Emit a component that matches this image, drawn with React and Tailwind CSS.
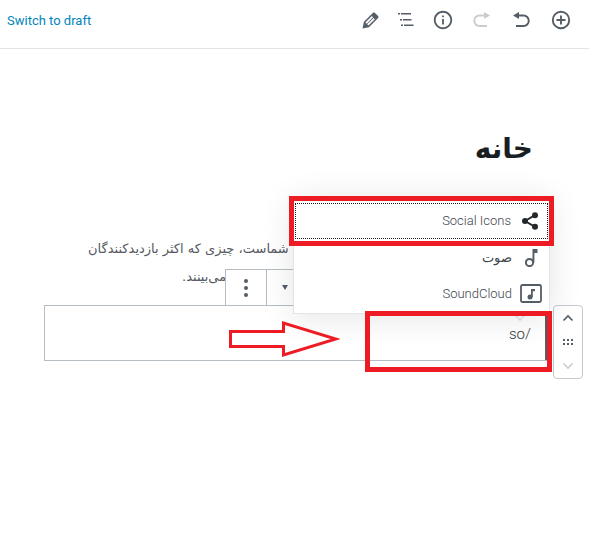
function Pencil() {
  return (
    <svg viewBox="0 0 20 20" className="w-[23px] h-[23px] fill-[#555d66]">
      <path d="M13.89 3.39l2.71 2.72c.46.46.42 1.24.03 1.64l-8.01 8.02-5.56 1.16 1.16-5.58s7.6-7.63 7.99-8.03c.39-.39 1.22-.39 1.68.07zm-2.73 2.79l-5.59 5.61 1.11 1.11 5.54-5.65zm-2.97 8.23l5.58-5.6-1.07-1.08-5.59 5.6z" />
    </svg>
  );
}
function Outline() {
  return (
    <svg viewBox="0 0 18 16" className="w-[18px] h-4 fill-[#555d66]">
      <path d="M1 1h2v1.4H1zM4 1h10v1.4H4zM3 7h2v1.4H3zM6 7h8.5v1.4H6zM4 12.5h2v1.4H4zM7 12.5h9.5v1.4H7z" />
    </svg>
  );
}
function Info() {
  return (
    <svg viewBox="0 0 24 24" className="w-[22px] h-[22px] fill-[#555d66]">
      <path d="M11 7h2v2h-2zm0 4h2v6h-2zm1-9C6.48 2 2 6.48 2 12s4.48 10 10 10 10-4.48 10-10S17.52 2 12 2zm0 18c-4.41 0-8-3.59-8-8s3.59-8 8-8 8 3.59 8 8-3.59 8-8 8z" />
    </svg>
  );
}
function Undo({ flip, color }) {
  return (
    <svg viewBox="0 0 18 16" className={flip ? "w-[18px] h-4 -scale-x-100" : "w-[18px] h-4"}>
      <path d="M7 0v7L1 3.5z" fill={color} />
      <path d="M6 3.5h5.5a5 5 0 0 1 0 10.5H4" fill="none" stroke={color} strokeWidth="1.9" />
    </svg>
  );
}
function Add() {
  return (
    <svg viewBox="0 0 20 20" className="w-5 h-5" fill="none" stroke="#555d66" strokeWidth="1.9">
      <circle cx="10" cy="10" r="8.2" />
      <path d="M10 5.5v9M5.5 10h9" />
    </svg>
  );
}
function Share() {
  return (
    <svg viewBox="0 0 24 24" className="w-[20px] h-[20px] fill-[#23282d]">
      <circle cx="6" cy="12" r="3.6" />
      <circle cx="18" cy="5" r="3.6" />
      <circle cx="18" cy="19" r="3.6" />
      <path d="M6 12L18 5M6 12l12 7" fill="none" stroke="#23282d" strokeWidth="2.2" />
    </svg>
  );
}
function Note() {
  return (
    <svg viewBox="0 0 14 18" className="w-3.5 h-[18px]" fill="none">
      <path d="M8.5 0h5v4H10.4v9.5H8.5z" fill="#555d66" />
      <circle cx="5.5" cy="13.5" r="3.6" stroke="#555d66" strokeWidth="2" />
    </svg>
  );
}
function Cloud() {
  return (
    <svg viewBox="0 0 22 20" className="w-[22px] h-5" fill="none">
      <rect x="1" y="1" width="20" height="17" rx="1.5" stroke="#555d66" strokeWidth="1.8" />
      <path d="M11 5h4v2.2h-2.2V13H11z" fill="#555d66" />
      <circle cx="10" cy="13" r="2.5" fill="#555d66" />
    </svg>
  );
}
function Chevron({ up, color }) {
  return (
    <svg viewBox="0 0 12 8" className="w-3 h-2" fill="none" stroke={color} strokeWidth="1.6">
      <path d={up ? "M1.5 6.5L6 2l4.5 4.5" : "M1.5 1.5L6 6l4.5-4.5"} />
    </svg>
  );
}
function MenuItem({ label, children, className = "", labelClass = "" }) {
  return (
    <div className={"flex items-center justify-end gap-[6px] " + className}>
      <span className={"text-[13px] font-light text-[#40464d] " + labelClass}>{label}</span>
      <span className="w-[26px] flex justify-center">{children}</span>
    </div>
  );
}

export default function App() {
  return (
    <div className="relative w-[589px] h-[541px] bg-white overflow-hidden font-['Roboto','DejaVu_Sans',sans-serif]">
      <header className="h-[49px] border-b border-[#e2e4e7] flex items-center justify-between">
        <a className="pl-[7px] text-[13px] text-[#0085ba] pb-[6px]">Switch to draft</a>
        <div className="flex items-center pb-[8px]">
          <span className="w-[38px] flex justify-center"><Pencil /></span>
          <span className="w-[34px] flex justify-center"><Outline /></span>
          <span className="w-[40px] flex justify-center"><Info /></span>
          <span className="w-[38px] flex justify-center"><Undo flip color="#c9ccd0" /></span>
          <span className="w-[40px] flex justify-center"><Undo color="#555d66" /></span>
          <span className="w-[40px] mr-[8px] flex justify-center"><Add /></span>
        </div>
      </header>

      <main>
        <h1 dir="rtl" className="mt-[78px] pr-[56px] h-[44px] leading-[44px] text-[28px] font-bold text-[#191e23] font-['DejaVu_Sans',sans-serif]">
          خانه
        </h1>
        <div className="mt-[64px] text-[13px] leading-[28px] text-[#55595f] font-['DejaVu_Sans',sans-serif]">
          <div className="pl-[88px] whitespace-nowrap">
            <span dir="rtl" className="inline-block tracking-[-0.5px]">این صفحه خانه سایت شماست، چیزی که اکثر بازدیدکنندگان</span>
          </div>
          <div className="pl-[182px] whitespace-nowrap">
            <span dir="rtl" className="inline-block tracking-[-0.5px]">می‌بینند.</span>
          </div>
        </div>
        <div dir="rtl" className="relative ml-[44px] mt-[14px] w-[504px] h-[56px] border border-[#b5bcc2] pr-[16px] pt-[16px] text-[15px] font-light leading-[24px] text-[#32373c]">
          /so
          <span className="absolute right-0 top-[10px] bottom-0 w-[2px] bg-[#555d66]" />
        </div>
      </main>

      {/* block toolbar */}
      <div className="absolute left-[225px] top-[269px] w-[80px] h-[37px] bg-white border border-[#b5bcc2] flex">
        <div className="w-[41px] border-r border-[#b5bcc2] flex flex-col items-center justify-center gap-[3px]">
          <span className="w-[4px] h-[4px] rounded-full bg-[#555d66]" />
          <span className="w-[4px] h-[4px] rounded-full bg-[#555d66]" />
          <span className="w-[4px] h-[4px] rounded-full bg-[#555d66]" />
        </div>
        <div className="flex-1 pl-[15px] pt-[15px]">
          <span className="block w-0 h-0 border-l-[3px] border-r-[3px] border-t-[5px] border-l-transparent border-r-transparent border-t-[#555d66]" />
        </div>
      </div>

      {/* block mover */}
      <div className="absolute left-[553px] top-[305px] w-[30px] h-[74px] bg-white border border-[#c5cad0] rounded-[4px] flex flex-col items-center justify-between py-[8px]">
        <Chevron up color="#555d66" />
        <span className="grid grid-cols-3 gap-[2px]">
          {[0, 1, 2, 3, 4, 5].map((i) => (
            <span key={i} className="w-[2px] h-[2px] bg-[#555d66]" />
          ))}
        </span>
        <Chevron color="#c9ccd0" />
      </div>

      {/* inserter popover */}
      <div className="absolute left-[293px] top-[197px] w-[257px] h-[117px] bg-white border border-[#e2e4e7] shadow-[0_3px_30px_rgba(25,30,35,0.12)] flex flex-col">
        <MenuItem label="Social Icons" className="h-[36px] mt-[5px] mx-[1px] pr-[4px] border border-dotted border-[#191e23]" labelClass="text-[12.5px]">
          <Share />
        </MenuItem>
        <MenuItem label="صوت" className="h-[36px] mt-[1px] pr-[5px]" labelClass="font-['DejaVu_Sans',sans-serif]">
          <Note />
        </MenuItem>
        <MenuItem label="SoundCloud" className="h-[36px] pr-[5px]">
          <Cloud />
        </MenuItem>
      </div>

      <div className="absolute left-[514px] top-[314px]">
        <Chevron color="#d5d8dc" />
      </div>

      {/* annotations */}
      <div className="absolute left-[289px] top-[196px] w-[265px] h-[50px] border-[5px] border-[#ed1c24]" />
      <div className="absolute left-[365px] top-[311px] w-[187px] h-[61px] border-[5px] border-[#ed1c24]" />
      <svg className="absolute left-[228px] top-[320px] w-[112px] h-[38px]" viewBox="0 0 112 38" fill="none">
        <path d="M2.5 11.5H55.5V3L108 19L55.5 35V26.5H2.5z" stroke="#ed1c24" strokeWidth="3" />
      </svg>
    </div>
  );
}
